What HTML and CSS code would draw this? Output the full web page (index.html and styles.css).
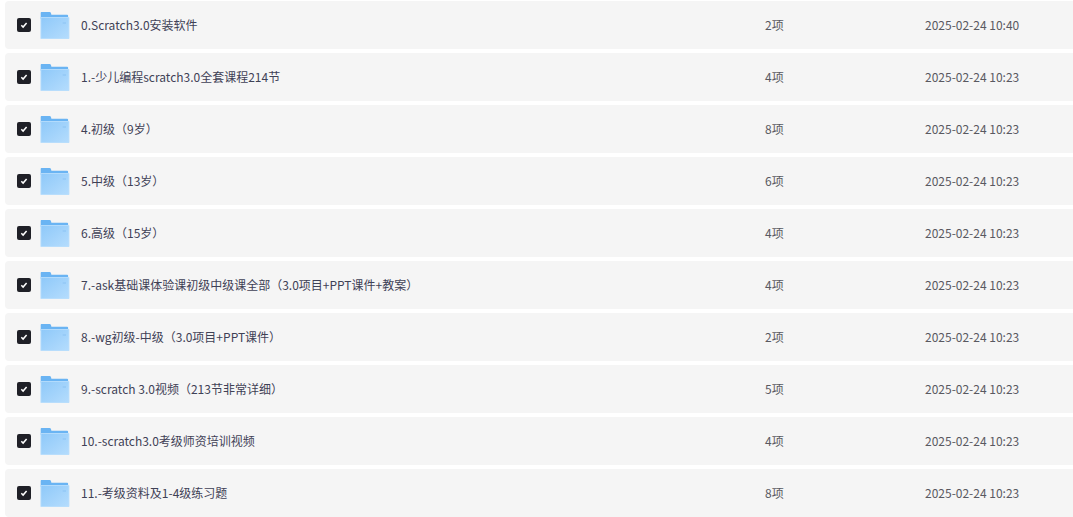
FILE: index.html
```html
<!DOCTYPE html>
<html lang="zh-CN">
<head>
    <meta charset="UTF-8">
    <title>文件列表</title>
    <link rel="stylesheet" href="styles.css">
</head>
<body>
    <svg class="defs" width="0" height="0">
        <defs>
            <linearGradient id="folderFront" x1="0" y1="0" x2="1" y2="1">
                <stop offset="0" stop-color="#8fc9f9"/>
                <stop offset="1" stop-color="#b4dcfd"/>
            </linearGradient>
            <symbol id="folder" viewBox="0 0 30 30">
                <path d="M0.700 3C0.700 2.400 1.100 2 1.700 2H9.600C10.200 2 10.600 2.300 10.900 2.800L11.400 4.700H27.200C27.700 4.700 28.100 5.100 28.100 5.600V9H0.700Z" fill="#6ab4f3"/>
                <path d="M0.400 7H28.400C29 7 29.400 7.400 29.400 8V28C29.400 28.600 29 29 28.400 29H1.400C0.800 29 0.400 28.600 0.400 28Z" fill="#b9defc"/>
                <path d="M1.300 7.800H28.500V28.100H1.300Z" fill="url(#folderFront)"/>
                <rect x="22.700" y="12" width="3.300" height="2" fill="#97cbf7"/>
            </symbol>
            <symbol id="check" viewBox="0 0 14 14">
                <path d="M4.300 7.300L6.100 9.100L9.600 5" fill="none" stroke="#fff" stroke-width="1.500"/>
            </symbol>
        </defs>
    </svg>

    <div class="file-list">
        <div class="file-row">
            <span class="checkbox"><svg width="14" height="14"><use href="#check"/></svg></span>
            <svg class="folder-icon" width="30" height="30"><use href="#folder"/></svg>
            <span class="file-name">0.Scratch3.0安装软件</span>
            <span class="file-count">2项</span>
            <span class="file-date">2025-02-24 10:40</span>
        </div>
        <div class="file-row">
            <span class="checkbox"><svg width="14" height="14"><use href="#check"/></svg></span>
            <svg class="folder-icon" width="30" height="30"><use href="#folder"/></svg>
            <span class="file-name">1.-少儿编程scratch3.0全套课程214节</span>
            <span class="file-count">4项</span>
            <span class="file-date">2025-02-24 10:23</span>
        </div>
        <div class="file-row">
            <span class="checkbox"><svg width="14" height="14"><use href="#check"/></svg></span>
            <svg class="folder-icon" width="30" height="30"><use href="#folder"/></svg>
            <span class="file-name">4.初级（9岁）</span>
            <span class="file-count">8项</span>
            <span class="file-date">2025-02-24 10:23</span>
        </div>
        <div class="file-row">
            <span class="checkbox"><svg width="14" height="14"><use href="#check"/></svg></span>
            <svg class="folder-icon" width="30" height="30"><use href="#folder"/></svg>
            <span class="file-name">5.中级（13岁）</span>
            <span class="file-count">6项</span>
            <span class="file-date">2025-02-24 10:23</span>
        </div>
        <div class="file-row">
            <span class="checkbox"><svg width="14" height="14"><use href="#check"/></svg></span>
            <svg class="folder-icon" width="30" height="30"><use href="#folder"/></svg>
            <span class="file-name">6.高级（15岁）</span>
            <span class="file-count">4项</span>
            <span class="file-date">2025-02-24 10:23</span>
        </div>
        <div class="file-row">
            <span class="checkbox"><svg width="14" height="14"><use href="#check"/></svg></span>
            <svg class="folder-icon" width="30" height="30"><use href="#folder"/></svg>
            <span class="file-name">7.-ask基础课体验课初级中级课全部（3.0项目+PPT课件+教案）</span>
            <span class="file-count">4项</span>
            <span class="file-date">2025-02-24 10:23</span>
        </div>
        <div class="file-row">
            <span class="checkbox"><svg width="14" height="14"><use href="#check"/></svg></span>
            <svg class="folder-icon" width="30" height="30"><use href="#folder"/></svg>
            <span class="file-name">8.-wg初级-中级（3.0项目+PPT课件）</span>
            <span class="file-count">2项</span>
            <span class="file-date">2025-02-24 10:23</span>
        </div>
        <div class="file-row">
            <span class="checkbox"><svg width="14" height="14"><use href="#check"/></svg></span>
            <svg class="folder-icon" width="30" height="30"><use href="#folder"/></svg>
            <span class="file-name">9.-scratch 3.0视频（213节非常详细）</span>
            <span class="file-count">5项</span>
            <span class="file-date">2025-02-24 10:23</span>
        </div>
        <div class="file-row">
            <span class="checkbox"><svg width="14" height="14"><use href="#check"/></svg></span>
            <svg class="folder-icon" width="30" height="30"><use href="#folder"/></svg>
            <span class="file-name">10.-scratch3.0考级师资培训视频</span>
            <span class="file-count">4项</span>
            <span class="file-date">2025-02-24 10:23</span>
        </div>
        <div class="file-row">
            <span class="checkbox"><svg width="14" height="14"><use href="#check"/></svg></span>
            <svg class="folder-icon" width="30" height="30"><use href="#folder"/></svg>
            <span class="file-name">11.-考级资料及1-4级练习题</span>
            <span class="file-count">8项</span>
            <span class="file-date">2025-02-24 10:23</span>
        </div>
    </div>
</body>
</html>
```

FILE: styles.css
```css
html, body {
    height: 517px;
    overflow: hidden;
}

body {
    margin: 0;
    background-color: #fff;
    font-family: "Noto Sans CJK SC", "Noto Sans", sans-serif;
    font-size: 12px;
    color: #595961;
}

.defs {
    display: block;
    height: 0;
}

.file-list {
    display: flex;
    flex-direction: column;
    gap: 4px;
    padding: 1px 0 0 5px;
}

.file-row {
    display: flex;
    align-items: center;
    height: 48px;
    flex-shrink: 0;
    padding-left: 12px;
    background-color: #f5f5f5;
    border-radius: 4px 0 0 4px;
}

.checkbox {
    display: flex;
    width: 14px;
    height: 14px;
    flex-shrink: 0;
    background-color: #1f2027;
    border-radius: 2px;
}

.folder-icon {
    flex-shrink: 0;
    margin-left: 9px;
}

.file-name {
    width: 684px;
    flex-shrink: 0;
    margin-left: 11px;
    padding-bottom: 2px;
    color: #3f4156;
}

.file-count {
    width: 160px;
    flex-shrink: 0;
    padding-bottom: 2px;
}

.file-date {
    padding-bottom: 2px;
}
```
